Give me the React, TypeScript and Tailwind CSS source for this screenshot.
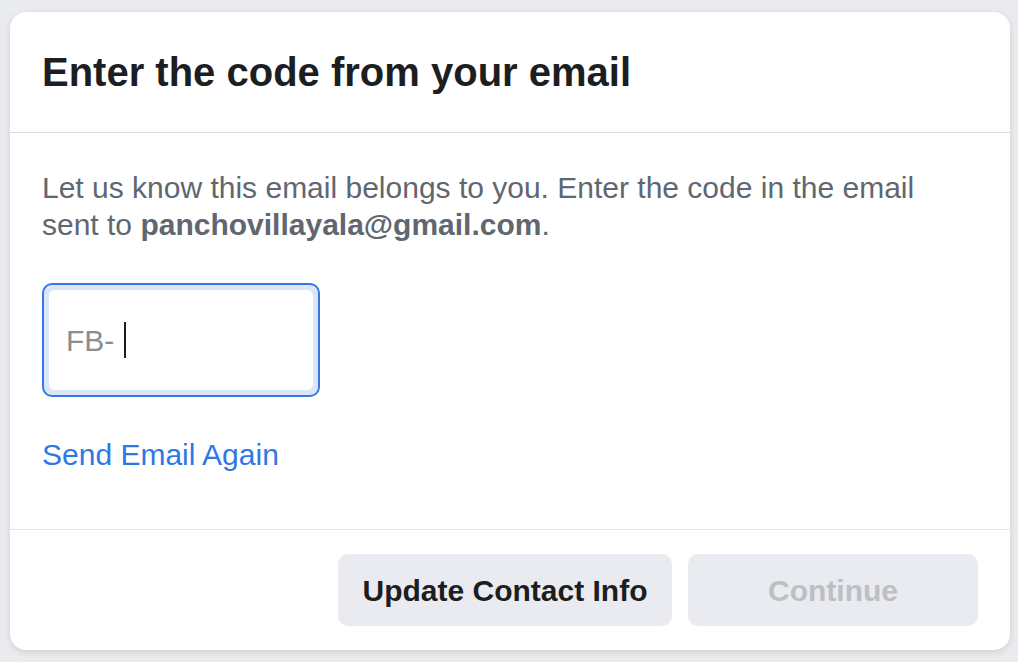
import React from "react";

export default function App() {
  return (
    <div
      className="w-[1018px] h-[662px] bg-[#e9ebee] pt-[12px] pl-[10px]"
      style={{ fontFamily: '"Liberation Sans", Arial, Helvetica, sans-serif' }}
    >
      <div className="w-[1000px] h-[638px] bg-white rounded-[16px] shadow-[0_2px_6px_rgba(0,0,0,0.12)] flex flex-col overflow-hidden">
        <div className="h-[121px] flex items-center px-[32px] border-b border-[#dadde1] shrink-0">
          <h1 className="text-[40px] font-bold text-[#1c1e21] leading-[48px]">
            Enter the code from your email
          </h1>
        </div>
        <div className="flex-1 px-[32px] pt-[36px]">
          <p className="text-[30px] leading-[37px] text-[#606770]">
            Let us know this email belongs to you. Enter the code in the email
            <br />
            sent to <span className="font-bold">panchovillayala@gmail.com</span>.
          </p>
          <div className="mt-[40px] w-[278px] h-[114px] rounded-[10px] border-2 border-[#3578e5] bg-[#dce6f9] p-[5px]">
            <div className="w-full h-full bg-white rounded-[6px] flex items-center pl-[17px]">
              <span className="text-[30px] text-[#8a8d91]">FB-</span>
              <span className="ml-[10px] w-[2px] h-[36px] bg-[#1c1e21]" />
            </div>
          </div>
          <div className="mt-[40px] text-[30px] leading-[36px] text-[#2d78e6]">
            Send Email Again
          </div>
        </div>
        <div className="h-[121px] border-t border-[#e4e6eb] flex items-center justify-end gap-[16px] pr-[32px] shrink-0">
          <button className="w-[334px] h-[72px] rounded-[10px] bg-[#e9ebf0] text-[30px] font-bold text-[#1c1e21]">
            Update Contact Info
          </button>
          <button className="w-[290px] h-[72px] rounded-[10px] bg-[#e9ebf0] text-[30px] font-bold text-[#bcc0c4]">
            Continue
          </button>
        </div>
      </div>
    </div>
  );
}
